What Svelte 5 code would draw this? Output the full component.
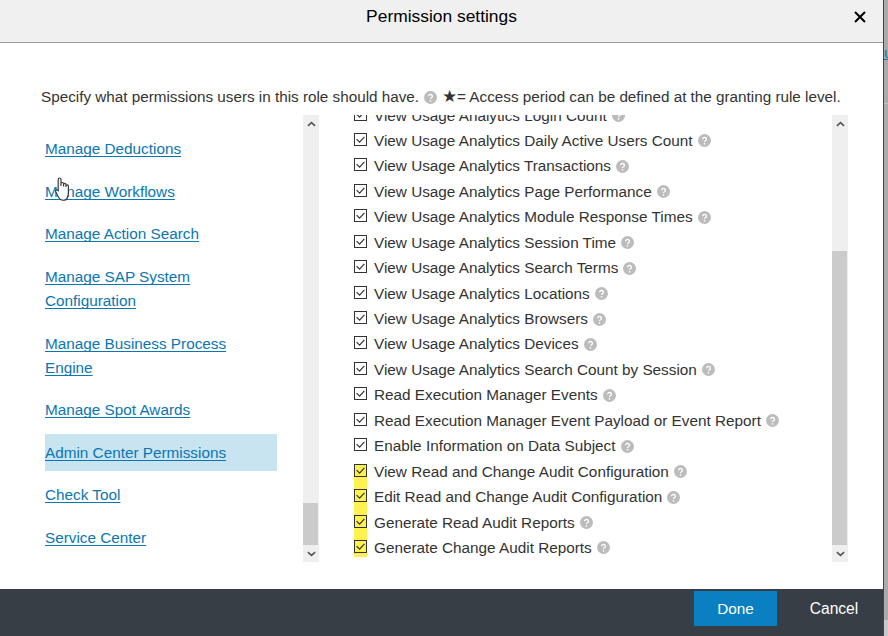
<script>
  const links = [
    { label: 'Manage Deductions' },
    { label: 'Manage Workflows' },
    { label: 'Manage Action Search' },
    { label: 'Manage SAP System Configuration', narrow: true },
    { label: 'Manage Business Process Engine', narrow: true },
    { label: 'Manage Spot Awards' },
    { label: 'Admin Center Permissions', active: true },
    { label: 'Check Tool' },
    { label: 'Service Center' }
  ];
  const perms = [
    'View Usage Analytics Login Count',
    'View Usage Analytics Daily Active Users Count',
    'View Usage Analytics Transactions',
    'View Usage Analytics Page Performance',
    'View Usage Analytics Module Response Times',
    'View Usage Analytics Session Time',
    'View Usage Analytics Search Terms',
    'View Usage Analytics Locations',
    'View Usage Analytics Browsers',
    'View Usage Analytics Devices',
    'View Usage Analytics Search Count by Session',
    'Read Execution Manager Events',
    'Read Execution Manager Event Payload or Event Report',
    'Enable Information on Data Subject'
  ];
  const audit = [
    'View Read and Change Audit Configuration',
    'Edit Read and Change Audit Configuration',
    'Generate Read Audit Reports',
    'Generate Change Audit Reports'
  ];
</script>

{#snippet help()}
  <svg class="help" viewBox="0 0 14 14" aria-hidden="true">
    <circle cx="7" cy="7" r="7" fill="#bcbcbc" />
    <path d="M5 5.6a2 2 0 1 1 3.1 1.7c-.8.4-1.1.7-1.1 1.4" fill="none" stroke="#fff" stroke-width="1.4" />
    <circle cx="7" cy="10.6" r=".9" fill="#fff" />
  </svg>
{/snippet}

{#snippet bar(thumb)}
  <div class="bar">
    <div class="btn">
      <svg viewBox="0 0 10 6" class="chev"><path d="M1 5l4-3.5L9 5" /></svg>
    </div>
    <div class="track"><div class="thumb" style="height: {thumb}px"></div></div>
    <div class="btn">
      <svg viewBox="0 0 10 6" class="chev"><path d="M1 1l4 3.5L9 1" /></svg>
    </div>
  </div>
{/snippet}

{#snippet row(label)}
  <li>
    <svg class="box" viewBox="0 0 13 13" aria-hidden="true">
      <rect x=".5" y=".5" width="12" height="12" />
      <path d="M2.6 6.2l3 3 4.8-5.4" />
    </svg>
    <span>{label}</span>
    {@render help()}
  </li>
{/snippet}

<div class="page">
  <div class="dialog">
    <header class="head">
      <h1>Permission settings</h1>
      <svg class="close" viewBox="0 0 12 12" aria-label="Close"><path d="M1 1l10 10M11 1L1 11" /></svg>
    </header>

    <main class="body">
      <p class="intro">
        <span>Specify what permissions users in this role should have.</span>
        {@render help()}
        <span class="note"><span class="star">★</span>= Access period can be defined at the granting rule level.</span>
      </p>
      <div class="panes">
        <div class="left">
          <ul class="nav">
            {#each links as l}
              <li class:active={l.active} class:narrow={l.narrow}><a href="#top">{l.label}</a></li>
            {/each}
          </ul>
          {@render bar(42)}
        </div>
        <div class="right">
          <div class="viewport">
            <ul class="perms">
              {#each perms as label}
                {@render row(label)}
              {/each}
            </ul>
            <ul class="perms audit">
              {#each audit as label}
                {@render row(label)}
              {/each}
            </ul>
          </div>
          {@render bar(294)}
        </div>
      </div>
    </main>

    <footer class="foot">
      <button class="done">Done</button>
      <button class="cancel">Cancel</button>
    </footer>
  </div>

  <aside class="backdrop">
    <a href="#top">u</a>
    <div class="rule"></div>
    <div class="low"></div>
  </aside>

  <svg class="cursor" viewBox="0 0 14 24" aria-hidden="true">
    <path d="M3.2 13.5V2.4a1.4 1.4 0 0 1 2.8 0V9V6.8a1.3 1.3 0 0 1 2.6 0V9.5V7.6a1.2 1.2 0 0 1 2.4 0V10V9a1.2 1.2 0 0 1 2.4 0V16c0 2.5-.8 3.5-1.2 5c-.4 1.6-2.4 2.4-4.8 2.2C4.6 23 4 21 3 19.4L.8 14.8c-.7-1.6 1.2-2.6 2.4-1.3z" fill="#fff" stroke="#3a3a3a" stroke-width="1.2" />
  </svg>
</div>

<style>
  :global(body) {
    margin: 0;
    background: #ababab;
  }
  .page {
    position: relative;
    width: 888px;
    height: 636px;
    overflow: hidden;
    display: flex;
    background: #ababab;
    font-family: "Liberation Sans", Arial, sans-serif;
    font-size: 15.3px;
    color: #333;
  }
  .dialog {
    width: 884px;
    height: 636px;
    flex: none;
    display: flex;
    flex-direction: column;
    background: #fff;
    border-right: 1px solid #444;
    box-sizing: border-box;
  }
  .backdrop {
    flex: 1;
    min-width: 0;
    overflow: hidden;
    display: flex;
    flex-direction: column;
  }
  .backdrop a {
    display: block;
    margin-top: 44px;
    line-height: 17px;
    color: #0a76b2;
    text-decoration: underline;
  }
  .rule {
    margin-top: 42px;
    height: 1px;
    background: #c4c4c4;
  }
  .low {
    margin-top: auto;
    height: 16px;
    background: #c8c8c8;
  }
  .head {
    height: 43px;
    flex: none;
    box-sizing: border-box;
    background: #f0f0f0;
    border-bottom: 1px solid #999;
    display: flex;
    align-items: center;
    justify-content: center;
    position: relative;
    padding: 4px 0 13px;
  }
  h1 {
    margin: 0;
    font-size: 17.4px;
    font-weight: 400;
    color: #000;
  }
  .close {
    position: absolute;
    right: 17px;
    top: 11px;
    width: 12px;
    height: 12px;
    fill: none;
    stroke: #000;
    stroke-width: 2;
  }
  .body {
    flex: 1;
    min-height: 0;
    padding: 45px 0 0 41px;
  }
  .intro {
    margin: 0 0 9px;
    line-height: 18px;
    display: flex;
    align-items: center;
    gap: 6px;
    white-space: nowrap;
    font-size: 15.25px;
  }
  .intro .help {
    margin-left: -1px;
  }
  .note {
    margin-left: -1px;
  }
  .star {
    font-size: 17px;
    line-height: 1;
  }
  .help {
    width: 13px;
    height: 13px;
    flex: none;
  }
  .panes {
    display: flex;
    height: 447px;
  }
  .left {
    display: flex;
    width: 278px;
    flex: none;
  }
  .nav {
    list-style: none;
    margin: 0 26px 0 0;
    padding: 22.2px 0 0 4px;
    flex: none;
    box-sizing: border-box;
    width: 236px;
  }
  .nav li {
    line-height: 24px;
    margin-bottom: 18.6px;
  }
  .nav li.narrow {
    width: 190px;
  }
  .nav li.active {
    background: #c8e4f1;
    padding: 6.5px 0;
    margin: -6.5px 0 12.1px;
  }
  .nav a {
    color: #0a76b2;
    text-decoration: underline;
    text-decoration-skip-ink: none;
    text-underline-offset: 2px;
  }
  .bar {
    width: 16px;
    flex: none;
    background: #efefef;
    display: flex;
    flex-direction: column;
  }
  .btn {
    height: 17px;
    flex: none;
    display: flex;
    align-items: center;
    justify-content: center;
  }
  .chev {
    width: 9px;
    height: 6px;
    fill: none;
    stroke: #555;
    stroke-width: 1.8;
  }
  .track {
    flex: 1;
    display: flex;
    flex-direction: column;
    justify-content: flex-end;
  }
  .thumb {
    background: #cbcbcb;
    width: 15px;
  }
  .right {
    display: flex;
    margin-left: 35px;
  }
  .viewport {
    width: 478px;
    overflow: hidden;
  }
  .perms {
    list-style: none;
    margin: -12.2px 0 0;
    padding: 0;
  }
  .perms.audit {
    margin: 0;
    background: linear-gradient(#fff14f, #fff14f) no-repeat 0 5px / 13px calc(100% - 9px);
  }
  .perms li {
    height: 25.45px;
    display: flex;
    align-items: center;
    white-space: nowrap;
  }
  .box {
    width: 13px;
    height: 13px;
    flex: none;
    margin: -3px 7px 0 0;
  }
  .box rect {
    fill: none;
    stroke: #333;
  }
  .box path {
    fill: none;
    stroke: #333;
    stroke-width: 1.2;
  }
  .perms .help {
    margin-left: 5px;
  }
  .foot {
    height: 47px;
    flex: none;
    background: #383e45;
    display: flex;
    align-items: flex-start;
    justify-content: flex-end;
    padding-top: 2px;
    box-sizing: border-box;
  }
  button {
    font: inherit;
    border: 0;
    color: #fff;
    background: none;
  }
  .done {
    width: 83px;
    height: 35px;
    background: #0a7fc2;
  }
  .cancel {
    width: 106px;
    height: 35px;
    padding: 0 0 0 8px;
    font-size: 15.6px;
  }
  .cursor {
    position: absolute;
    left: 55px;
    top: 177px;
    width: 14px;
    height: 24px;
  }
</style>
